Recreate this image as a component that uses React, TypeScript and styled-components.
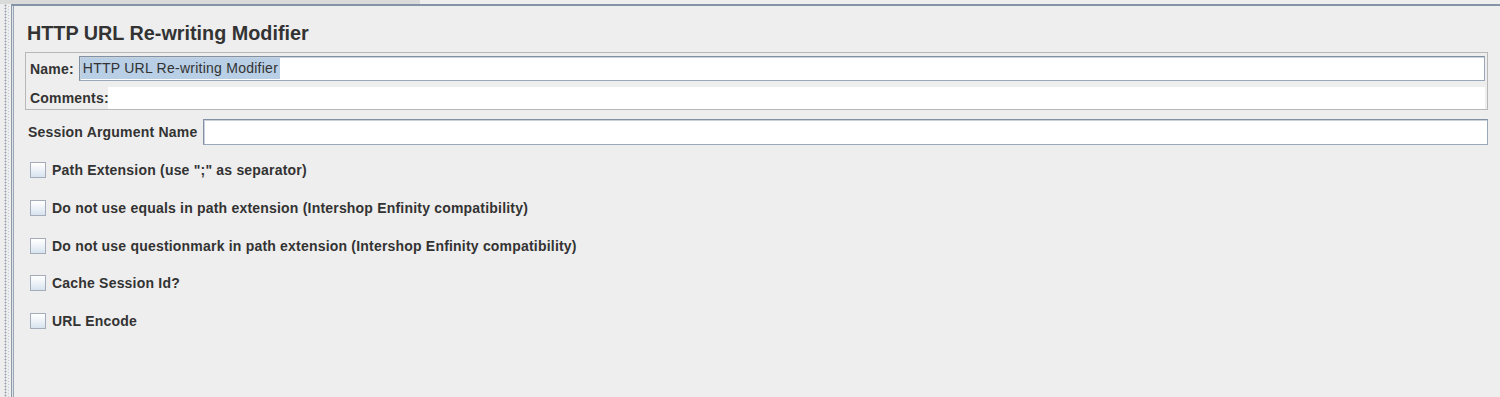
import styled, { createGlobalStyle } from 'styled-components';

const GlobalStyle = createGlobalStyle`
  html, body {
    margin: 0;
    padding: 0;
    background: #eeeeee;
  }
  body {
    font-family: "Liberation Sans", Arial, sans-serif;
    color: #333333;
  }
`;

const Screen = styled.div`
  display: flex;
  flex-direction: column;
  width: 1500px;
  height: 397px;
  overflow: hidden;
  background: #eeeeee;
`;

const TopStrip = styled.div`
  height: 4px;
  background: linear-gradient(to right, #dadada 0, #dadada 420px, #eeeeee 420px);
`;

const Body = styled.div`
  display: flex;
  flex: 1;
  min-height: 0;
`;

const Splitter = styled.div`
  width: 11px;
  flex-shrink: 0;
  background-image:
    radial-gradient(circle, #9aa4b2 0.9px, transparent 1.1px),
    radial-gradient(circle, #c4cad3 0.6px, transparent 0.9px);
  background-size: 3px 3px, 3px 3px;
  background-position: 4px 0, 7px 1px;
  background-repeat: repeat-y;
`;

const Panel = styled.div`
  flex: 1;
  border-top: 2px solid #8593a6;
  border-left: 1px solid #8f9bab;
  box-shadow: inset 1px 0 0 #dfe3e8, inset 2px 0 0 #9ba6b5;
  padding: 0 12px 0 13px;
  display: flex;
  flex-direction: column;
`;

const Title = styled.h1`
  margin: 16px 0 0 2px;
  font-size: 19.8px;
  line-height: 23px;
  font-weight: bold;
  color: #333333;
`;

const NameBox = styled.div`
  margin-top: 7px;
  border: 1px solid #b8b8b8;
  padding: 3px 2px 0 4px;
  display: flex;
  flex-direction: column;
`;

const FieldRow = styled.div<{ $gap?: number }>`
  display: flex;
  align-items: center;
  gap: ${({ $gap }) => $gap ?? 5}px;
`;

const Label = styled.label`
  font-size: 14px;
  letter-spacing: 0.2px;
  font-weight: bold;
  white-space: nowrap;
  color: #333333;
`;

const TextInput = styled.div<{ $height?: number }>`
  flex: 1;
  height: ${({ $height }) => $height ?? 25}px;
  box-sizing: border-box;
  background: #ffffff;
  border: 1px solid #9aa7b8;
  border-top-color: #8391a4;
  border-left-color: #8391a4;
  box-shadow: inset 1px 1px 0 #c9d1db;
  display: flex;
  align-items: center;
  padding-left: 1px;
  font-size: 14px;
  letter-spacing: 0.25px;
  color: #333333;
`;

const Selected = styled.span`
  background: #b8cfe5;
  padding: 3px 2px 3px 2px;
  line-height: 15px;
`;

const CommentsArea = styled.div`
  flex: 1;
  height: 22px;
  background: #ffffff;
  margin-left: -3px;
`;

const SessionRow = styled(FieldRow)`
  margin-top: 9px;
  margin-left: 3px;
`;

const CheckList = styled.div`
  display: flex;
  flex-direction: column;
  gap: 21.75px;
  margin-top: 17px;
  padding-left: 5px;
`;

const CheckRow = styled.label`
  display: flex;
  align-items: center;
  gap: 6px;
  height: 16px;
  font-size: 14px;
  letter-spacing: 0.2px;
  font-weight: bold;
  color: #333333;
`;

const Box = styled.span`
  width: 16px;
  height: 16px;
  box-sizing: border-box;
  border: 1px solid #a3acb8;
  background: linear-gradient(to bottom, #ffffff 0%, #f1f5f9 40%, #d7e3ef 100%);
  flex-shrink: 0;
`;

const options = [
  'Path Extension (use ";" as separator)',
  'Do not use equals in path extension (Intershop Enfinity compatibility)',
  'Do not use questionmark in path extension (Intershop Enfinity compatibility)',
  'Cache Session Id?',
  'URL Encode',
];

export default function App() {
  return (
    <Screen>
      <GlobalStyle />
      <TopStrip />
      <Body>
        <Splitter />
        <Panel>
          <Title>HTTP URL Re-writing Modifier</Title>
          <NameBox>
            <FieldRow>
              <Label>Name:</Label>
              <TextInput>
                <Selected>HTTP URL Re-writing Modifier</Selected>
              </TextInput>
            </FieldRow>
            <FieldRow style={{ marginTop: 6 }} $gap={2}>
              <Label>Comments:</Label>
              <CommentsArea />
            </FieldRow>
          </NameBox>
          <SessionRow $gap={6}>
            <Label>Session Argument Name</Label>
            <TextInput $height={26} />
          </SessionRow>
          <CheckList>
            {options.map((o) => (
              <CheckRow key={o}>
                <Box />
                {o}
              </CheckRow>
            ))}
          </CheckList>
        </Panel>
      </Body>
    </Screen>
  );
}
